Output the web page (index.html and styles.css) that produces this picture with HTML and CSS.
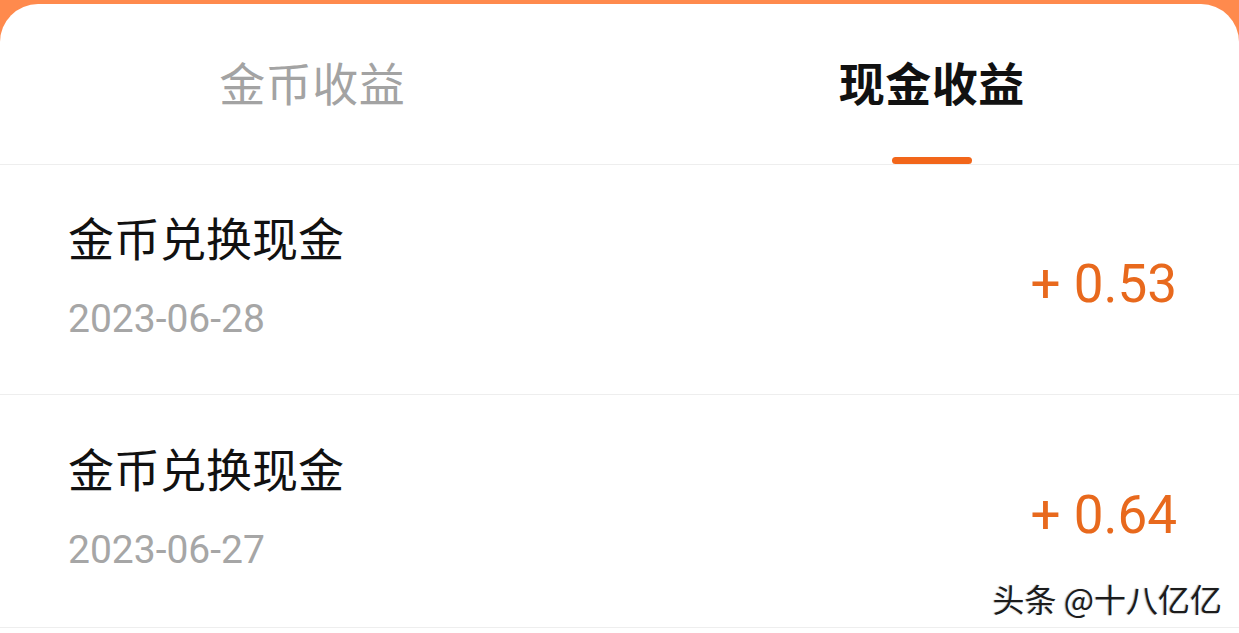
FILE: index.html
```html
<!DOCTYPE html>
<html lang="zh-CN">
<head>
<meta charset="utf-8">
<title>现金收益</title>
<link rel="stylesheet" href="styles.css">
</head>
<body>
<div class="card">
  <div class="tabs">
    <div class="tab">
      <span class="tab-label">金币收益</span>
    </div>
    <div class="tab tab-active">
      <span class="tab-label">现金收益</span>
      <span class="tab-bar"></span>
    </div>
  </div>
  <div class="list">
    <div class="row">
      <div class="info">
        <div class="title">金币兑换现金</div>
        <div class="date">2023-06-28</div>
      </div>
      <div class="amount">+ 0.53</div>
    </div>
    <div class="row row-last">
      <div class="info">
        <div class="title">金币兑换现金</div>
        <div class="date">2023-06-27</div>
      </div>
      <div class="amount">+ 0.64</div>
    </div>
  </div>
  <div class="watermark">头条 @十八亿亿</div>
</div>
</body>
</html>
```

FILE: styles.css
```css
html, body {
  margin: 0;
  padding: 0;
}
body {
  background: #ff8a4d;
  width: 1239px;
  height: 633px;
  overflow: hidden;
  font-family: "Noto Sans CJK SC", "Noto Sans", sans-serif;
}
.card {
  position: relative;
  margin-top: 4px;
  background: #ffffff;
  border-radius: 38px 38px 0 0;
  height: 629px;
}
.tabs {
  display: flex;
  height: 160px;
  border-bottom: 1px solid #eeeeee;
}
.tab {
  flex: 1;
  display: flex;
  flex-direction: column;
  align-items: center;
  padding-left: 5px;
}
.tab-label {
  margin-top: 47px;
  font-size: 46px;
  line-height: 60px;
  color: #a3a3a3;
  letter-spacing: 0.5px;
}
.tab-active .tab-label {
  color: #111111;
  font-weight: 700;
}
.tab-bar {
  margin-top: 46px;
  width: 80px;
  height: 9px;
  border-radius: 5px;
  background: #f2661a;
}
.row {
  display: flex;
  align-items: center;
  justify-content: space-between;
  height: 229px;
  padding: 0 62px 0 68px;
  border-bottom: 1px solid #eeeeee;
}
.row-last {
  height: 232px;
}
.info {
  display: flex;
  flex-direction: column;
  gap: 30px;
  padding-bottom: 8px;
}
.title {
  font-size: 46px;
  line-height: 56px;
  color: #111111;
}
.date {
  font-family: Roboto, "Noto Sans", sans-serif;
  font-size: 39px;
  line-height: 50px;
  color: #a6a6a6;
}
.amount {
  padding-top: 8px;
  font-family: Roboto, "Noto Sans", sans-serif;
  font-size: 53px;
  line-height: 60px;
  color: #e8691d;
}
.watermark {
  position: absolute;
  right: 17px;
  bottom: 16px;
  font-size: 32px;
  line-height: 38px;
  color: #1c1c1c;
  text-shadow: 1px 1px 1px rgba(255,255,255,0.9), -1px 0 1px rgba(120,120,120,0.5);
}
```
